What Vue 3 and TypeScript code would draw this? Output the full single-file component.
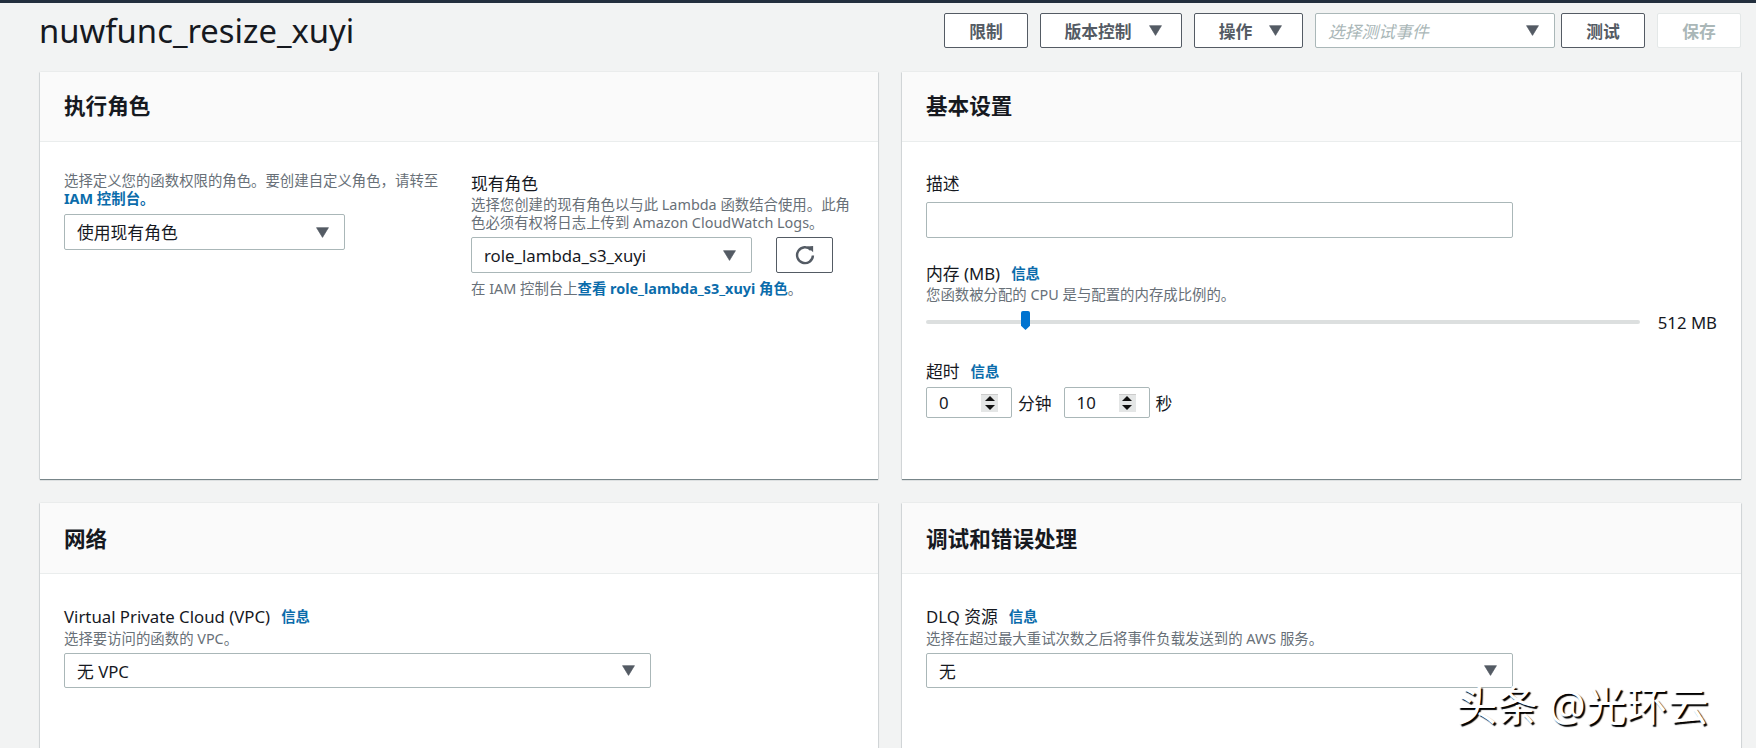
<script setup lang="ts">
interface Spin { value: string; unit: string }
const spins: Spin[] = [
  { value: '0', unit: '分钟' },
  { value: '10', unit: '秒' },
]
</script>

<template>
  <div class="page">
    <header class="top">
      <h1 class="title">nuwfunc_resize_xuyi</h1>
      <div class="actions">
        <button class="btn w-84">限制</button>
        <button class="btn w-142 has-tri">版本控制<svg class="tri tri-gap" viewBox="0 0 12 10"><path d="M0.5 0.5H11.5L6 9.5Z" /></svg></button>
        <button class="btn w-109 has-tri">操作<svg class="tri tri-gap" viewBox="0 0 12 10"><path d="M0.5 0.5H11.5L6 9.5Z" /></svg></button>
        <div class="select event">
          <span class="placeholder">选择测试事件</span>
          <svg class="tri" viewBox="0 0 12 10"><path d="M0.5 0.5H11.5L6 9.5Z" /></svg>
        </div>
        <button class="btn w-84 tight">测试</button>
        <button class="btn w-84 disabled">保存</button>
      </div>
    </header>

    <main class="grid">
      <section class="card">
        <h2 class="card-head">执行角色</h2>
        <div class="card-body two">
          <div>
            <p class="desc">选择定义您的函数权限的角色。要创建自定义角色，请转至 <a class="link">IAM 控制台。</a></p>
            <div class="select role">
              <span>使用现有角色</span>
              <svg class="tri" viewBox="0 0 12 10"><path d="M0.5 0.5H11.5L6 9.5Z" /></svg>
            </div>
          </div>
          <div>
            <div class="label">现有角色</div>
            <p class="desc">选择您创建的现有角色以与此 Lambda 函数结合使用。此角色必须有权将日志上传到 Amazon CloudWatch Logs。</p>
            <div class="role-row">
              <div class="select role">
                <span>role_lambda_s3_xuyi</span>
                <svg class="tri" viewBox="0 0 12 10"><path d="M0.5 0.5H11.5L6 9.5Z" /></svg>
              </div>
              <button class="btn refresh" aria-label="刷新">
                <svg viewBox="0 0 20 20" width="22" height="22" fill="none">
                  <path d="M15.4 5.4A7.2 7.2 0 1 0 17.2 10.4" stroke="#545b64" stroke-width="2.2" />
                  <path d="M11.8 2.2L17.4 1.8V7.6Z" fill="#545b64" />
                </svg>
              </button>
            </div>
            <p class="desc note">在 IAM 控制台上<a class="link">查看 role_lambda_s3_xuyi 角色</a>。</p>
          </div>
        </div>
      </section>

      <section class="card">
        <h2 class="card-head">基本设置</h2>
        <div class="card-body">
          <div class="label">描述</div>
          <div class="input wide"></div>

          <div class="label mem">内存 (MB)<a class="link info">信息</a></div>
          <p class="desc">您函数被分配的 CPU 是与配置的内存成比例的。</p>
          <div class="slider-row">
            <div class="track"><span class="thumb"></span></div>
            <span class="slider-value">512 MB</span>
          </div>

          <div class="label timeout">超时<a class="link info">信息</a></div>
          <div class="spin-row">
            <template v-for="s in spins" :key="s.unit">
              <div class="spin">
                <span>{{ s.value }}</span>
                <span class="spinner"><i class="up"></i><i class="down"></i></span>
              </div>
              <span class="unit">{{ s.unit }}</span>
            </template>
          </div>
        </div>
      </section>

      <section class="card lower">
        <h2 class="card-head">网络</h2>
        <div class="card-body">
          <div class="label">Virtual Private Cloud (VPC)<a class="link info">信息</a></div>
          <p class="desc">选择要访问的函数的 VPC。</p>
          <div class="select wide">
            <span>无 VPC</span>
            <svg class="tri" viewBox="0 0 12 10"><path d="M0.5 0.5H11.5L6 9.5Z" /></svg>
          </div>
        </div>
      </section>

      <section class="card lower">
        <h2 class="card-head">调试和错误处理</h2>
        <div class="card-body">
          <div class="label">DLQ 资源<a class="link info">信息</a></div>
          <p class="desc">选择在超过最大重试次数之后将事件负载发送到的 AWS 服务。</p>
          <div class="select wide">
            <span>无</span>
            <svg class="tri" viewBox="0 0 12 10"><path d="M0.5 0.5H11.5L6 9.5Z" /></svg>
          </div>
        </div>
      </section>
    </main>

    <div class="watermark">头条 @光环云</div>
  </div>
</template>

<style>
html, body { margin: 0; background: #f2f3f3; overflow: hidden; }
</style>

<style scoped>
.page {
  position: relative;
  box-sizing: border-box;
  width: 1756px;
  height: 748px;
  overflow: hidden;
  background: #f2f3f3;
  border-top: 3px solid #232f3e;
  padding: 0 15px 0 40px;
  font-family: "Noto Sans", "Noto Sans CJK SC", sans-serif;
  color: #16191f;
}
.top {
  display: flex;
  justify-content: space-between;
  align-items: flex-start;
  height: 69px;
}
.title {
  margin: 5px 0 0 -1px;
  font-size: 32.8px;
  font-weight: 400;
  line-height: 46px;
}
.actions {
  display: flex;
  gap: 12px;
  padding-top: 10px;
}
.btn {
  box-sizing: border-box;
  height: 35px;
  border: 1px solid #545b64;
  border-radius: 2px;
  background: #fff;
  color: #545b64;
  font: bold 16.8px "Noto Sans", "Noto Sans CJK SC", sans-serif;
  padding: 0;
  display: inline-flex;
  align-items: center;
  justify-content: center;
}
.has-tri { padding-left: 4px; }
.w-84 { width: 84px; }
.w-142 { width: 142px; }
.w-109 { width: 109px; }
.tight { margin-left: -6px; }
.disabled {
  border-color: #e4e8e8;
  color: #aab7b8;
}
.tri {
  width: 13px;
  height: 11px;
  flex: none;
  fill: #545b64;
  stroke: #545b64;
  stroke-width: 0.6;
  stroke-linejoin: round;
}
.tri-gap { margin-left: 17px; }
.select {
  box-sizing: border-box;
  height: 35px;
  border: 1px solid #aab7b8;
  border-radius: 2px;
  background: #fff;
  display: flex;
  align-items: center;
  justify-content: space-between;
  padding: 0 15px 0 12px;
  font-size: 16.8px;
}
.event {
  width: 240px;
}
.placeholder {
  color: #aab7b8;
  font-style: italic;
}
.grid {
  display: grid;
  grid-template-columns: 838px 839px;
  grid-auto-rows: 407px;
  gap: 24px;
}
.card {
  background: #fff;
  box-shadow: 0 1px 1px 0 rgba(0, 28, 36, 0.5), 1px 0 1px 0 rgba(0, 28, 36, 0.05), -1px 0 1px 0 rgba(0, 28, 36, 0.05), 0 -1px 0 0 #eef0f0;
}
.card-head {
  box-sizing: border-box;
  margin: 0;
  height: 70px;
  padding: 0 24px;
  background: #fafafa;
  border-bottom: 1px solid #eaeded;
  font-size: 21.6px;
  font-weight: 700;
  line-height: 68px;
}
.lower .card-head {
  height: 71px;
  line-height: 71px;
}
.card-body {
  padding: 30px 24px 0;
}
.lower .card-body {
  padding-top: 31px;
}
.lower .desc {
  margin-top: 1px;
}
.lower .select {
  margin-top: 5px;
}
.two {
  display: grid;
  grid-template-columns: 383px 383px;
  gap: 24px;
}
.label {
  font-size: 16.8px;
  line-height: 24px;
  display: flex;
  align-items: center;
}
.desc {
  margin: 0;
  font-size: 14.4px;
  line-height: 18px;
  color: #687078;
}
.link {
  color: #0b6cab;
  font-weight: 700;
}
.info {
  font-size: 14.4px;
  margin-left: 11px;
}
.role { width: 281px; height: 36px; margin-top: 6px; }
.role-row {
  display: flex;
  align-items: flex-start;
  gap: 24px;
  margin-top: -1px;
}
.refresh {
  width: 57px;
  height: 36px;
  margin-top: 6px;
}
.note { margin-top: 7px; }
.input {
  box-sizing: border-box;
  height: 36px;
  margin-top: 6px;
  border: 1px solid #aab7b8;
  border-radius: 2px;
  background: #fff;
}
.wide { width: 587px; }
.mem { margin-top: 24px; }
.slider-row {
  display: flex;
  align-items: center;
  height: 20px;
  margin-top: 8px;
}
.track {
  position: relative;
  width: 714px;
  height: 4px;
  background: #dcdfdf;
  border-radius: 2px;
}
.thumb {
  position: absolute;
  left: 95px;
  top: -9px;
  width: 9px;
  height: 19px;
  background: #0073d0;
  border-radius: 2px 2px 0 0;
  clip-path: polygon(0 0, 100% 0, 100% 78%, 50% 100%, 0 78%);
}
.slider-value {
  margin-left: 18px;
  font-size: 16.8px;
}
.timeout { margin-top: 28px; }
.spin-row {
  display: flex;
  align-items: center;
  margin-top: 3px;
}
.spin {
  box-sizing: border-box;
  width: 86px;
  height: 31px;
  padding: 0 13px 0 12px;
  border: 1px solid #aab7b8;
  border-radius: 2px;
  background: #fff;
  display: flex;
  align-items: center;
  justify-content: space-between;
  font-size: 16.8px;
}
.spin + .unit { margin: 0 12px 0 6px; font-size: 16.8px; }
.spinner {
  width: 17px;
  height: 17px;
  background: #e4e6e6;
  border-top: 1px solid #ccc;
  display: flex;
  flex-direction: column;
  align-items: center;
  justify-content: space-around;
}
.up, .down {
  width: 0;
  height: 0;
  border-left: 5px solid transparent;
  border-right: 5px solid transparent;
}
.up { border-bottom: 5px solid #111; }
.down { border-top: 5px solid #111; }
.watermark {
  position: absolute;
  left: 1456px;
  top: 677px;
  font-size: 41px;
  line-height: 50px;
  white-space: nowrap;
  color: #fff;
  text-shadow: 2px 2px 1px #000;
}
</style>
